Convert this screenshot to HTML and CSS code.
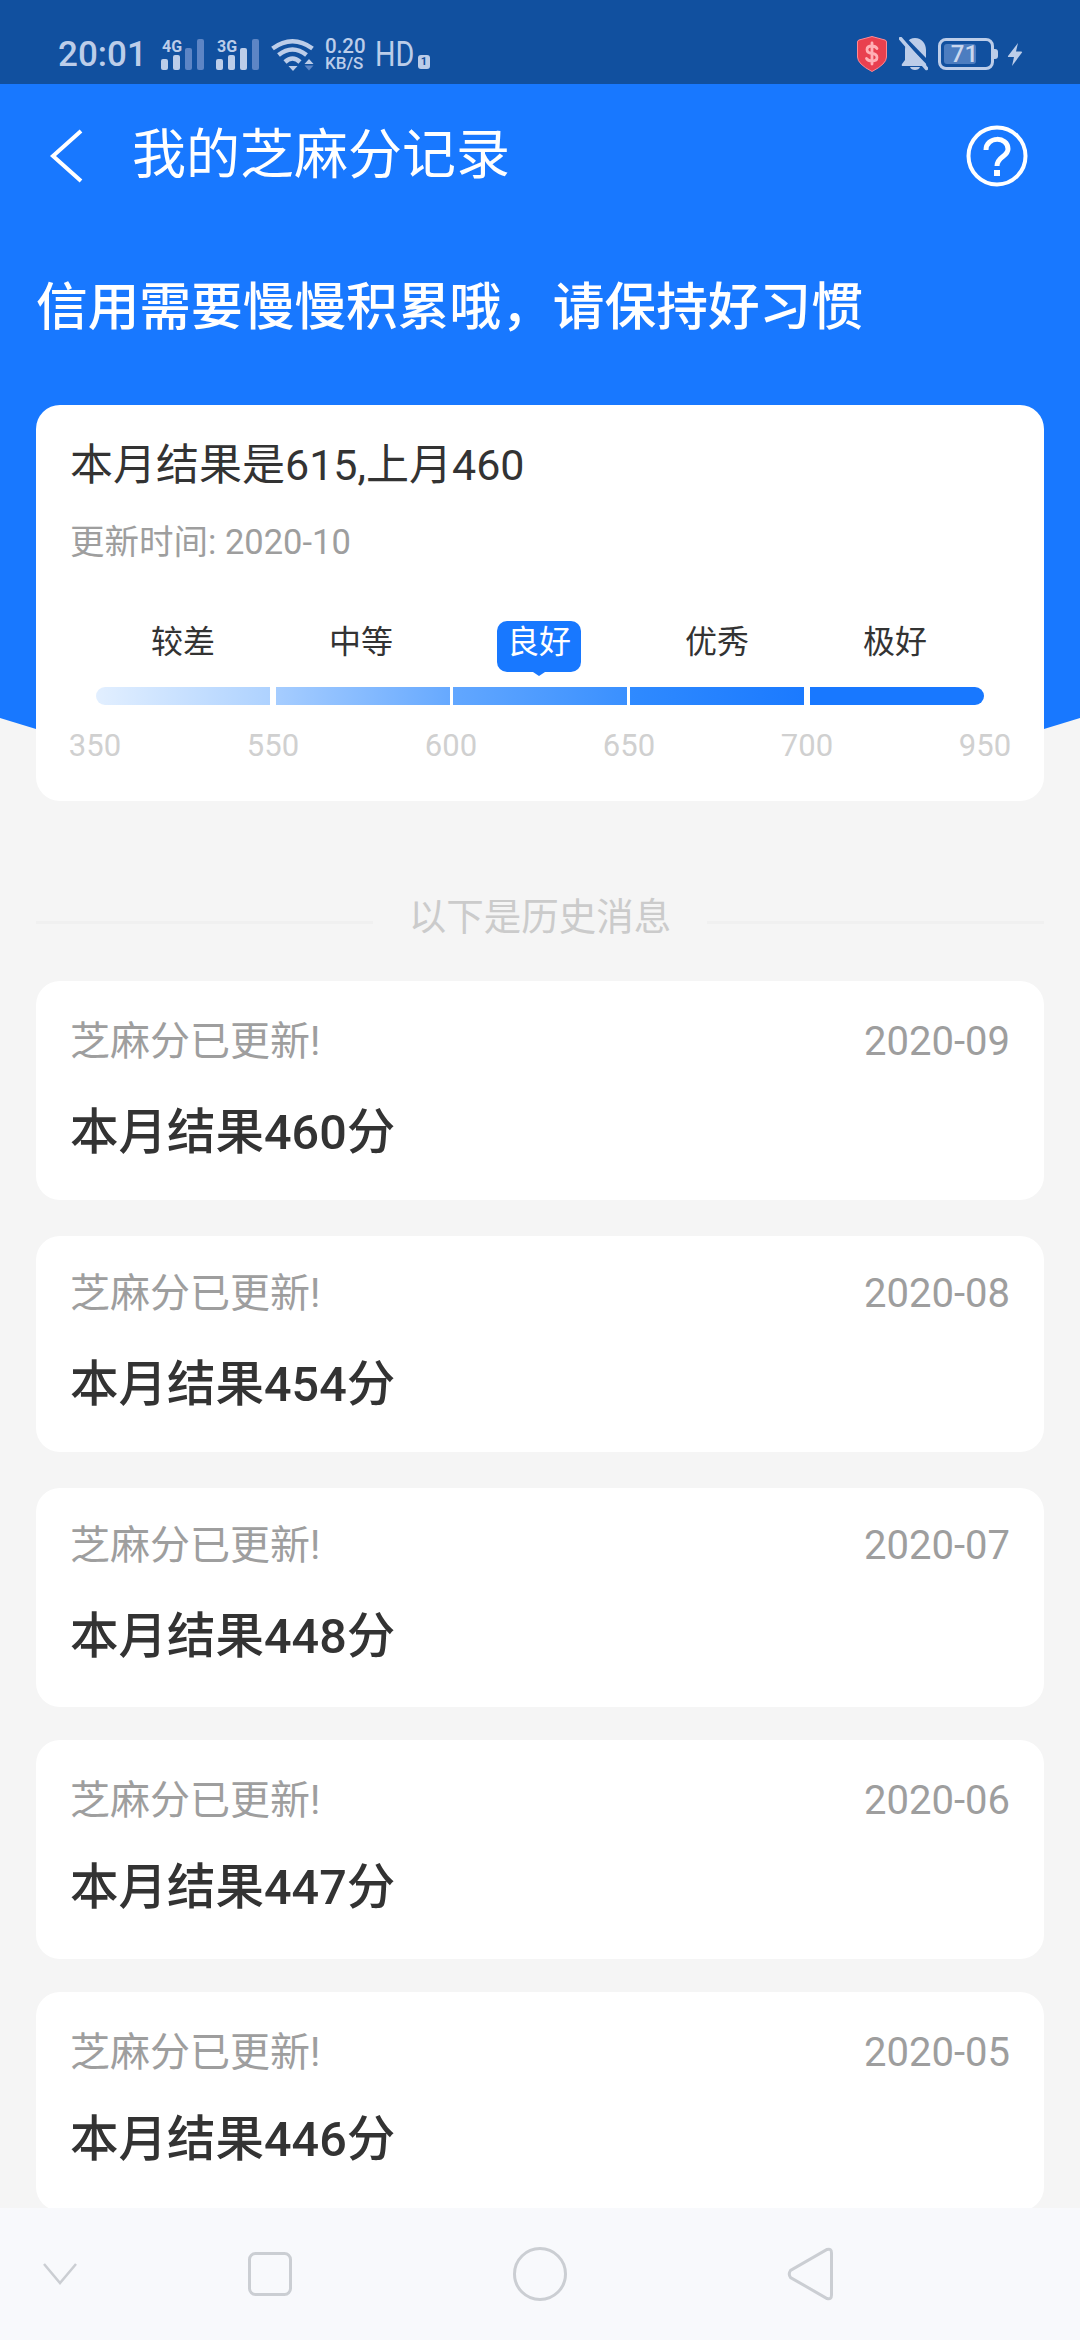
FILE: index.html
```html
<!DOCTYPE html>
<html lang="zh-CN">
<head>
<meta charset="utf-8">
<title>我的芝麻分记录</title>
<link rel="stylesheet" href="styles.css">
</head>
<body>
<div class="screen">
  <div class="hero-bg"></div>
  <div class="status">
    <div class="status-left">
      <span class="clock">20:01</span>
      <span class="sim"><span class="sim-label">4G</span>
        <svg width="43" height="31" viewBox="0 0 43 31"><g fill="#bccde9"><rect x="0" y="20" width="7" height="11" rx="2"/><rect x="12" y="16" width="7" height="15" rx="2"/></g><g fill="#5d85c5"><rect x="24" y="9" width="7" height="22" rx="2"/><rect x="36" y="0" width="7" height="31" rx="2"/></g></svg></span>
      <span class="sim"><span class="sim-label">3G</span>
        <svg width="43" height="31" viewBox="0 0 43 31"><g fill="#bccde9"><rect x="0" y="20" width="7" height="11" rx="2"/><rect x="12" y="16" width="7" height="15" rx="2"/><rect x="24" y="9" width="7" height="22" rx="2"/></g><rect x="36" y="0" width="7" height="31" rx="2" fill="#5d85c5"/></svg></span>
      <svg class="wifi" width="43" height="33" viewBox="0 0 43 33"><g fill="none" stroke="#bccde9" stroke-width="4.500"><path d="M1.500 10.500 Q21.500 -4 41.500 10.500"/><path d="M7.500 17 Q21.500 6 35.500 17"/><path d="M14 24 Q21.500 17 29 24"/></g><path d="M17.500 28 H26.500 L22 33Z" fill="#bccde9"/><path d="M38 21 L42.500 26 H33.500Z" fill="#bccde9"/><path d="M33.500 27.500 H42.500 L38 32.500Z" fill="#5d85c5"/></svg>
      <span class="speed"><span class="speed-num">0.20</span><span class="speed-unit">KB/S</span></span>
      <span class="hd">HD</span><span class="hd-num">1</span>
    </div>
    <div class="status-right">
      <svg width="30" height="36" viewBox="0 0 30 36"><path d="M15 .5 L28 4 Q29.500 4.500 29.500 6 V21 Q29.500 28 15 35.500 Q.5 28 .5 21 V6 Q.5 4.500 2 4Z" fill="#e9404f" stroke="#ff8a93" stroke-width="1"/><path d="M20 12.500 Q18.500 10 15 10 Q10 10 10 13.500 Q10 17 15 17.500 Q20 18 20 21.500 Q20 25 15 25 Q11 25 9.500 22.500 M15 7 V28" fill="none" stroke="#ffb0b6" stroke-width="2.800" stroke-linecap="round"/></svg>
      <svg class="bell" width="29" height="34" viewBox="0 0 29 34"><path d="M16 1 C9 1 6 7 6 13 V23 L3 27 Q2 29 4 29 H26 Q28 29 27 27 L27 13 C27 7 23 1 16 1Z" fill="#bccde9"/><path d="M11 30 C12 34 20 34 21 30Z" fill="#bccde9"/><path d="M2 -2 L32 29" stroke="#11509f" stroke-width="4"/><path d="M1.500 1.500 L27.500 31.500" stroke="#bccde9" stroke-width="3.500" stroke-linecap="round"/></svg>
      <span class="battery"><span class="battery-level"></span><span class="battery-num">71</span></span>
      <svg class="bolt" width="16" height="23" viewBox="0 0 16 23"><path d="M11 0 L1 13 Q.5 14 2 14 H7 L5 23 L15 9.500 Q15.500 8.500 14 8.500 H9Z" fill="#bccde9"/></svg>
    </div>
  </div>
  <header class="appbar">
    <svg class="back" width="36" height="54" viewBox="0 0 36 54"><path d="M33 2 L5 27 L33 52" fill="none" stroke="#fff" stroke-width="4"/></svg>
    <h1 class="title">我的芝麻分记录</h1>
    <svg class="help" width="62" height="62" viewBox="0 0 62 62"><circle cx="31" cy="31" r="28.500" fill="none" stroke="#fff" stroke-width="4"/><path d="M20 25 C20 11 42 11 42 24 C42 32 31 31 31 41" fill="none" stroke="#fff" stroke-width="5"/><rect x="28" y="45" width="6" height="6" fill="#fff"/></svg>
  </header>
  <p class="slogan">信用需要慢慢积累哦，请保持好习惯</p>
  <section class="score-card">
    <div class="score-line">本月结果是615,上月460</div>
    <div class="score-time">更新时间: 2020-10</div>
    <div class="levels">
      <span class="level">较差</span>
      <span class="level">中等</span>
      <span class="level level-tag">良好</span>
      <span class="level">优秀</span>
      <span class="level">极好</span>
    </div>
    <div class="bar">
      <span class="seg seg1"></span><span class="seg seg2"></span><span class="seg seg3"></span><span class="seg seg4"></span><span class="seg seg5"></span>
    </div>
    <div class="ticks"><span>350</span><span>550</span><span>600</span><span>650</span><span>700</span><span>950</span></div>
  </section>
  <div class="divider"><span class="divider-text">以下是历史消息</span></div>
  <div class="records">
    <article class="record"><div class="record-head"><span>芝麻分已更新!</span><span>2020-09</span></div><div class="record-value">本月结果460分</div></article>
    <article class="record"><div class="record-head"><span>芝麻分已更新!</span><span>2020-08</span></div><div class="record-value">本月结果454分</div></article>
    <article class="record"><div class="record-head"><span>芝麻分已更新!</span><span>2020-07</span></div><div class="record-value">本月结果448分</div></article>
    <article class="record"><div class="record-head"><span>芝麻分已更新!</span><span>2020-06</span></div><div class="record-value">本月结果447分</div></article>
    <article class="record"><div class="record-head"><span>芝麻分已更新!</span><span>2020-05</span></div><div class="record-value">本月结果446分</div></article>
  </div>
  <nav class="navbar">
    <svg width="34" height="22" viewBox="0 0 34 22"><path d="M1 1 L17 20 L33 1" fill="none" stroke="#cbced3" stroke-width="2.500"/></svg>
    <svg width="44" height="44" viewBox="0 0 44 44"><rect x="1.500" y="1.500" width="41" height="41" rx="6" fill="none" stroke="#cbced3" stroke-width="3"/></svg>
    <svg width="54" height="54" viewBox="0 0 54 54"><circle cx="27" cy="27" r="25.500" fill="none" stroke="#cbced3" stroke-width="3"/></svg>
    <svg width="46" height="54" viewBox="0 0 46 54"><path d="M40 2.500 Q44.500 1 44.500 6 V48 Q44.500 53 40 51.500 L3.500 30.500 Q1 27 3.500 23.500Z" fill="none" stroke="#cbced3" stroke-width="3"/></svg>
  </nav>
</div>
</body>
</html>
```
FILE: styles.css
```css
* { box-sizing: border-box; }
html, body { margin: 0; padding: 0; }
body { background: #f5f5f5; font-family: Roboto, "Noto Sans CJK SC", sans-serif; }
.screen { position: relative; width: 1080px; height: 2340px; overflow: hidden; background: #f5f5f5; }
.hero-bg { position: absolute; top: 0; left: 0; width: 1080px; height: 800px; background: #1878ff; clip-path: polygon(0 0, 100% 0, 100% 718px, 1044px 729px, 36px 729px, 0 718px); }
.status { position: relative; height: 84px; background: #11509f; padding: 32px 57px 0 58px; display: flex; justify-content: space-between; align-items: flex-start; color: #bccde9; }
.status-left { display: flex; align-items: center; height: 44px; }
.status-right { display: flex; align-items: center; height: 44px; }
.clock { font-size: 35px; line-height: 44px; padding-top: 2px; font-weight: 500; width: 103px; }
.sim { position: relative; display: flex; width: 55px; height: 31px; }
.sim-label { position: absolute; left: 1px; top: 0; font-size: 16px; font-weight: 700; line-height: 16px; }
.sim svg { display: block; }
.speed { display: flex; flex-direction: column; margin-left: 11px; width: 50px; font-weight: 500; }
.speed-num { font-size: 20.500px; line-height: 19px; }
.speed-unit { font-size: 17px; line-height: 15px; }
.hd { display: block; width: 43px; font-size: 35px; line-height: 44px; padding-top: 2px; font-weight: 400; transform: scaleX(.82); transform-origin: left center; }
.hd-num { font-size: 11px; font-weight: 700; background: #bccde9; color: #11509f; border-radius: 3px; width: 12px; height: 14px; line-height: 14px; text-align: center; margin-top: 16px; }
.battery { position: relative; width: 56px; height: 32px; border: 3px solid #bccde9; border-radius: 8px; margin-left: 10px; display: block; }
.battery::after { content: ""; position: absolute; right: -7px; top: 8px; width: 4px; height: 10px; background: #bccde9; border-radius: 0 3px 3px 0; }
.battery-level { position: absolute; left: 3px; top: 3px; bottom: 3px; width: 32px; background: #4c7dc0; border-radius: 3px; }
.battery-num { position: absolute; left: 0; right: 0; top: 0; text-align: center; font-size: 24px; line-height: 26px; font-weight: 500; color: #c9d7ee; padding-right: 3px; }
.bolt { margin-left: 13px; }
.bell { margin-left: 12px; }
.appbar { position: relative; height: 100px; display: flex; align-items: center; padding: 0 52px 0 48px; margin-top: 22px; }
.back { flex: none; margin-right: 48px; }
.title { flex: 1; margin: 0; font-size: 54px; line-height: 60px; font-weight: 400; color: #fff; }
.help { flex: none; }
.slogan { position: relative; margin: 0; padding: 66px 36px 0; height: 199px; font-size: 51.700px; line-height: 72px; font-weight: 500; color: #fff; white-space: nowrap; }
.score-card { position: relative; margin: 0 36px; height: 396px; background: #fff; border-radius: 24px; padding: 32px 34px 0; }
.score-line { font-size: 43px; line-height: 56px; color: #333; }
.score-time { margin-top: 27px; font-size: 34.500px; line-height: 44px; color: #9e9e9e; }
.levels { display: grid; grid-template-columns: repeat(5, 178px); grid-template-rows: 51px; margin: 57px 0 0 24px; height: 51px; }
.level { display: flex; align-items: center; justify-content: center; font-size: 32px; line-height: 34px; color: #333; padding-bottom: 10px; }
.level-tag { position: relative; justify-self: center; width: 84px; height: 51px; border-radius: 10px; background: #1878ff; color: #fff; }
.level-tag::after { content: ""; position: absolute; left: 36px; bottom: -4px; border: 6px solid transparent; border-top-color: #1878ff; border-top-width: 4px; border-bottom: 0; }
.bar { display: flex; margin: 15px 0 0 26px; height: 18px; }
.seg { flex: none; width: 174px; }
.seg1 { border-radius: 9px 0 0 9px; background: linear-gradient(90deg, #e2efff, #aed2ff); }
.seg2 { margin-left: 6px; background: linear-gradient(90deg, #a6cdff, #66a9ff); }
.seg3 { margin-left: 3px; background: linear-gradient(90deg, #62a7ff, #3a90ff); }
.seg4 { margin-left: 3px; background: linear-gradient(90deg, #2f8aff, #1b7aff); }
.seg5 { margin-left: 6px; border-radius: 0 9px 9px 0; background: #1878ff; }
.ticks { display: grid; grid-template-columns: repeat(6, 178px); justify-items: center; margin: 19px 0 0 -64px; font-size: 31px; line-height: 44px; color: #d0d0d0; }
.divider { position: relative; display: flex; align-items: center; justify-content: center; margin: 94px 36px 0; height: 44px; }
.divider::before, .divider::after { content: ""; flex: 1; height: 3px; background: #f0f0f0; margin-top: 10px; }
.divider-text { padding: 0 36px; font-size: 37.500px; line-height: 44px; color: #cbcbcb; }
.records { position: relative; display: flex; flex-direction: column; gap: 33px; margin: 42px 36px 0; }
.record { flex: none; height: 219px; background: #fff; border-radius: 24px; padding: 36px 34px 0; }
.record:nth-child(2) { height: 216px; margin-top: 3px; padding-top: 33px; }
.record:nth-child(3) { margin-top: 3px; padding-top: 33px; }
.record-head { display: flex; justify-content: space-between; font-size: 40px; line-height: 50px; color: #9e9e9e; }
.record-value { margin-top: 36px; font-size: 48.500px; line-height: 60px; font-weight: 500; color: #333; }
.record:nth-child(n+4) .record-value { margin-top: 32px; }
.navbar { position: absolute; left: 0; right: 0; bottom: 0; height: 132px; background: #f8f9fc; display: grid; grid-template-columns: 120px 300px 240px 300px; align-items: center; justify-items: center; }
```
